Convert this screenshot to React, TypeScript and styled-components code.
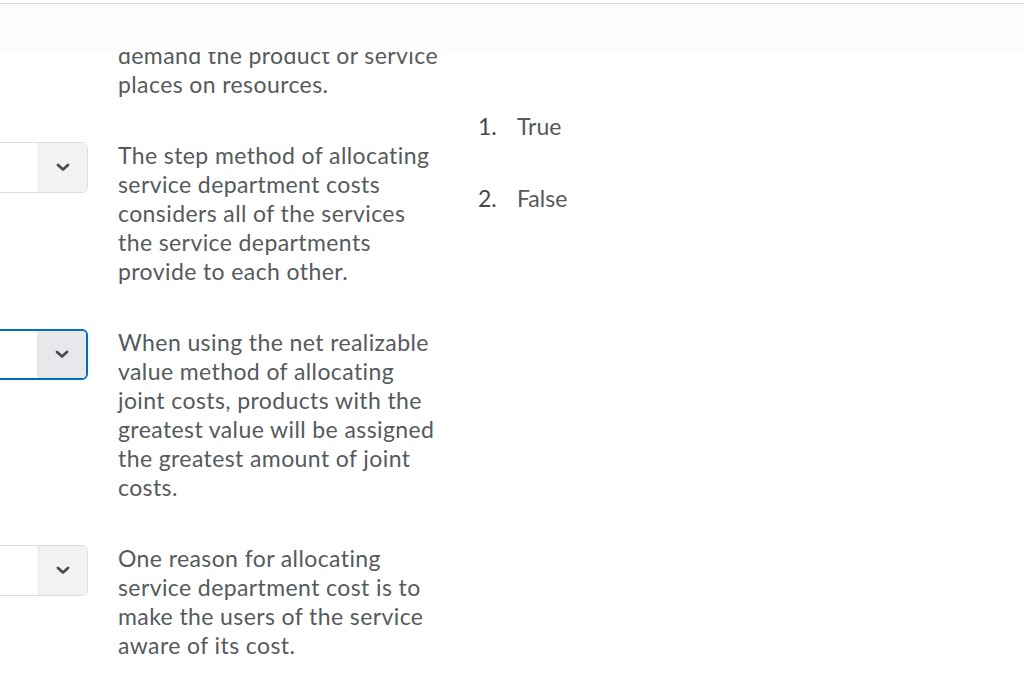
import React from "react";
import styled, { createGlobalStyle, css } from "styled-components";

const Global = createGlobalStyle`
  html, body { margin: 0; padding: 0; background: #ffffff; }
  body { font-family: Lato, "Open Sans", sans-serif; color: #565a5c; }
`;

const Viewport = styled.div`
  position: relative;
  width: 1024px;
  height: 682px;
  overflow: hidden;
  background: #ffffff;
`;

const TopShade = styled.div`
  position: absolute;
  top: 0;
  left: 0;
  right: 0;
  height: 52px;
  z-index: 2;
  background: #fcfcfd;
  border-top: 3px solid #ffffff;
  box-sizing: border-box;
  &::before {
    content: "";
    display: block;
    height: 1px;
    background: #d6d9df;
  }
`;

const Layout = styled.div`
  display: grid;
  grid-template-columns: 478px 1fr;
  padding-top: 41px;
`;

const QuestionList = styled.div`
  display: flex;
  flex-direction: column;
  gap: 42px;
`;

const Row = styled.div`
  display: flex;
  align-items: flex-start;
  gap: 30px;
  margin-left: -60px;
`;

const SelectBox = styled.div<{ $focused?: boolean; $hidden?: boolean }>`
  flex: 0 0 auto;
  width: 148px;
  height: 51px;
  margin-top: 1px;
  box-sizing: border-box;
  display: flex;
  border: 1px solid #d9dce1;
  border-radius: 6px;
  overflow: hidden;
  background: #ffffff;
  visibility: ${(p) => (p.$hidden ? "hidden" : "visible")};
  ${(p) =>
    p.$focused &&
    css`
      border: 2px solid #006fbf;
    `}
`;

const SelectValue = styled.div`
  flex: 1;
`;

const SelectButton = styled.div<{ $focused?: boolean }>`
  width: 48px;
  display: flex;
  align-items: center;
  justify-content: center;
  background: ${(p) => (p.$focused ? "#e6e8ec" : "#f1f2f4")};
  border-left: 1px solid #e3e5e9;
  color: #494c4e;
`;

const QuestionText = styled.p`
  margin: 0;
  width: 325px;
  font-size: 23px;
  letter-spacing: 0.4px;
  line-height: 29px;
  color: #565a5c;
`;

const AnswerList = styled.ol`
  list-style: none;
  margin: 71px 0 0 0;
  padding: 0;
  display: flex;
  flex-direction: column;
  gap: 43px;
`;

const AnswerItem = styled.li`
  display: flex;
  font-size: 23px;
  line-height: 29px;
`;

const AnswerNum = styled.span`
  width: 39px;
  color: #45484a;
`;

const AnswerLabel = styled.span`
  color: #565a5c;
`;

const Chevron = () => (
  <svg width="14" height="9" viewBox="0 0 14 9" fill="none">
    <path d="M2 2 L7 6.5 L12 2" stroke="currentColor" strokeWidth="2.8" strokeLinecap="round" strokeLinejoin="round" />
  </svg>
);

const Select = ({ focused }: { focused?: boolean }) => (
  <SelectBox $focused={focused}>
    <SelectValue />
    <SelectButton $focused={focused}>
      <Chevron />
    </SelectButton>
  </SelectBox>
);

const questions = [
  "The step method of allocating service department costs considers all of the services the service departments provide to each other.",
  "When using the net realizable value method of allocating joint costs, products with the greatest value will be assigned the greatest amount of joint costs.",
  "One reason for allocating service department cost is to make the users of the service aware of its cost.",
];

export default function App() {
  return (
    <Viewport>
      <Global />
      <TopShade />
      <Layout>
        <QuestionList>
          <Row>
            <SelectBox $hidden />
            <QuestionText>demand the product or service places on resources.</QuestionText>
          </Row>
          {questions.map((q, i) => (
            <Row key={i}>
              <Select focused={i === 1} />
              <QuestionText>{q}</QuestionText>
            </Row>
          ))}
        </QuestionList>
        <AnswerList>
          <AnswerItem>
            <AnswerNum>1.</AnswerNum>
            <AnswerLabel>True</AnswerLabel>
          </AnswerItem>
          <AnswerItem>
            <AnswerNum>2.</AnswerNum>
            <AnswerLabel>False</AnswerLabel>
          </AnswerItem>
        </AnswerList>
      </Layout>
    </Viewport>
  );
}
